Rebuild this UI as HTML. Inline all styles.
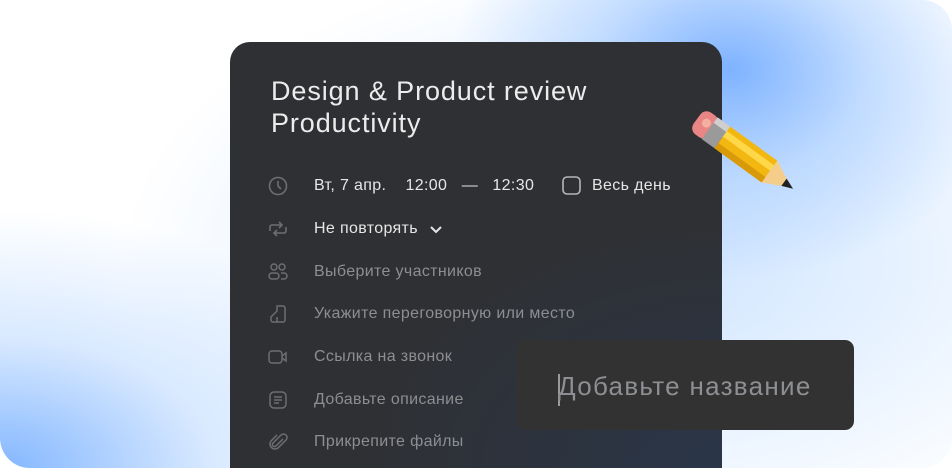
<!DOCTYPE html>
<html><head><meta charset="utf-8"><style>
*{margin:0;padding:0;box-sizing:border-box}
html,body{width:952px;height:468px;background:#fff;overflow:hidden}
body{font-family:"Liberation Sans",sans-serif}
.outer{position:absolute;left:0;top:0;width:952px;height:468px;border-radius:30px;overflow:hidden;
background:
radial-gradient(ellipse 280px 210px at 730px 70px,rgba(120,175,255,0.95),rgba(150,195,255,0.5) 50%,rgba(255,255,255,0) 100%),
radial-gradient(ellipse 420px 260px at 0px 470px,rgba(130,182,255,1),rgba(190,218,255,0.6) 50%,rgba(255,255,255,0) 100%),
radial-gradient(ellipse 520px 300px at 640px 260px,rgba(200,225,255,0.9),rgba(255,255,255,0) 100%),#fff}
.card{position:absolute;left:230px;top:42px;width:492px;height:426px;border-radius:20px 20px 0 0;
background:radial-gradient(ellipse 380px 260px at 500px 430px,#2a3649,#2f3033 100%),#2f3033}
.title{position:absolute;left:41px;top:33px;color:#ececec;font-size:27px;line-height:32px;letter-spacing:0.9px}
.row{position:absolute;left:0;height:24px;display:flex;align-items:center;font-size:16px;color:#8d8e91;letter-spacing:0.35px}
.row svg{position:absolute;left:38px;top:2px}
.row span{position:absolute;left:84px;white-space:nowrap}
.w{color:#e6e6e6}
.inp{position:absolute;left:516px;top:340px;width:338px;height:90px;background:#323232;border-radius:9px}
.inp span{position:absolute;left:42px;top:31px;font-size:26px;color:#8e8f93;letter-spacing:1.3px}
.inp i{position:absolute;left:42px;top:34px;width:1.5px;height:32px;background:#9a9a9a}
</style></head><body>
<div class="outer">
<div class="card">
<div class="title">Design &amp; Product review<br>Productivity</div>
<div class="row" style="top:132px"><svg width="20" height="20" viewBox="0 0 20 20" fill="none" stroke="#6d6e72" stroke-width="1.6"><circle cx="10" cy="10" r="8.5"/><path d="M10 5v5l3 3"/></svg>
<span class="w">Вт, 7 апр.&nbsp;&nbsp;&nbsp;&nbsp;12:00&nbsp;&nbsp;&nbsp;—&nbsp;&nbsp;&nbsp;12:30</span>
<svg style="left:332px;top:2px" width="19" height="19" viewBox="0 0 19 19" fill="none" stroke="#b5b6b8" stroke-width="1.6"><rect x="1" y="1" width="17" height="17" rx="4"/></svg>
<span class="w" style="left:362px">Весь день</span></div>
<div class="row" style="top:175px"><svg width="20" height="20" viewBox="0 0 20 20" fill="none" stroke="#6d6e72" stroke-width="1.6"><path d="M2 12V8a2 2 0 0 1 2-2h10M11 3l3 3-3 3M18 8v4a2 2 0 0 1-2 2H6M9 17l-3-3 3-3"/></svg>
<span class="w">Не повторять <svg style="position:static;vertical-align:middle;margin-left:6px" width="14" height="10" viewBox="0 0 14 10" fill="none" stroke="#e6e6e6" stroke-width="2"><path d="M2 3l5 5 5-5"/></svg></span></div>
<div class="row" style="top:218px"><svg width="20" height="20" viewBox="0 0 20 20" fill="none" stroke="#6d6e72" stroke-width="1.5"><circle cx="6" cy="5" r="3"/><circle cx="14" cy="5" r="3"/><rect x="1" y="11" width="10" height="6" rx="3"/><path d="M13 11h3a3 3 0 0 1 0 6h-3"/></svg><span>Выберите участников</span></div>
<div class="row" style="top:260px"><svg width="20" height="20" viewBox="0 0 20 20" fill="none" stroke="#6d6e72" stroke-width="1.5"><path d="M9 2h6a2 2 0 0 1 2 2v12a2 2 0 0 1-2 2H5a2 2 0 0 1-2-2v-3l6-6z"/><path d="M9 18v-5"/></svg><span>Укажите переговорную или место</span></div>
<div class="row" style="top:303px"><svg width="20" height="20" viewBox="0 0 20 20" fill="none" stroke="#6d6e72" stroke-width="1.5"><rect x="1" y="4" width="13" height="12" rx="3"/><path d="M14 9l4-3v8l-4-3"/></svg><span>Ссылка на звонок</span></div>
<div class="row" style="top:346px"><svg width="20" height="20" viewBox="0 0 20 20" fill="none" stroke="#6d6e72" stroke-width="1.5"><rect x="2" y="2" width="16" height="16" rx="4"/><path d="M6 7h8M6 10h8M6 13h5"/></svg><span>Добавьте описание</span></div>
<div class="row" style="top:388px"><svg width="20" height="20" viewBox="0 0 20 20" fill="none" stroke="#6d6e72" stroke-width="1.5"><path d="M15 7l-7 7a2 2 0 0 1-3-3l8-8a3.5 3.5 0 0 1 5 5l-8 8a5 5 0 0 1-7-7l6-6"/></svg><span>Прикрепите файлы</span></div>
</div>
<svg style="position:absolute;left:675px;top:95px" width="125" height="100" viewBox="0 0 125 100">
<g transform="translate(22,24) rotate(36) scale(1.12)">
<rect x="0" y="-12" width="18" height="24" rx="7" fill="#e98585"/>
<circle cx="9" cy="-2" r="4" fill="#f1b0a0"/>
<rect x="14" y="-12" width="14" height="24" fill="#9a9a9a"/>
<rect x="14" y="-12" width="14" height="6" fill="#cfcfcf"/>
<rect x="28" y="-12" width="52" height="24" fill="#f3b712"/>
<rect x="28" y="-7" width="52" height="6" fill="#ffd84a"/>
<rect x="28" y="6" width="52" height="6" fill="#d99a0a"/>
<path d="M80 -12L104 0 80 12z" fill="#f5cd8a"/>
<path d="M96 -4L106 0 96 4z" fill="#222"/>
</g></svg>
<div class="inp"><i></i><span>Добавьте название</span></div>
</div>
</body></html>
